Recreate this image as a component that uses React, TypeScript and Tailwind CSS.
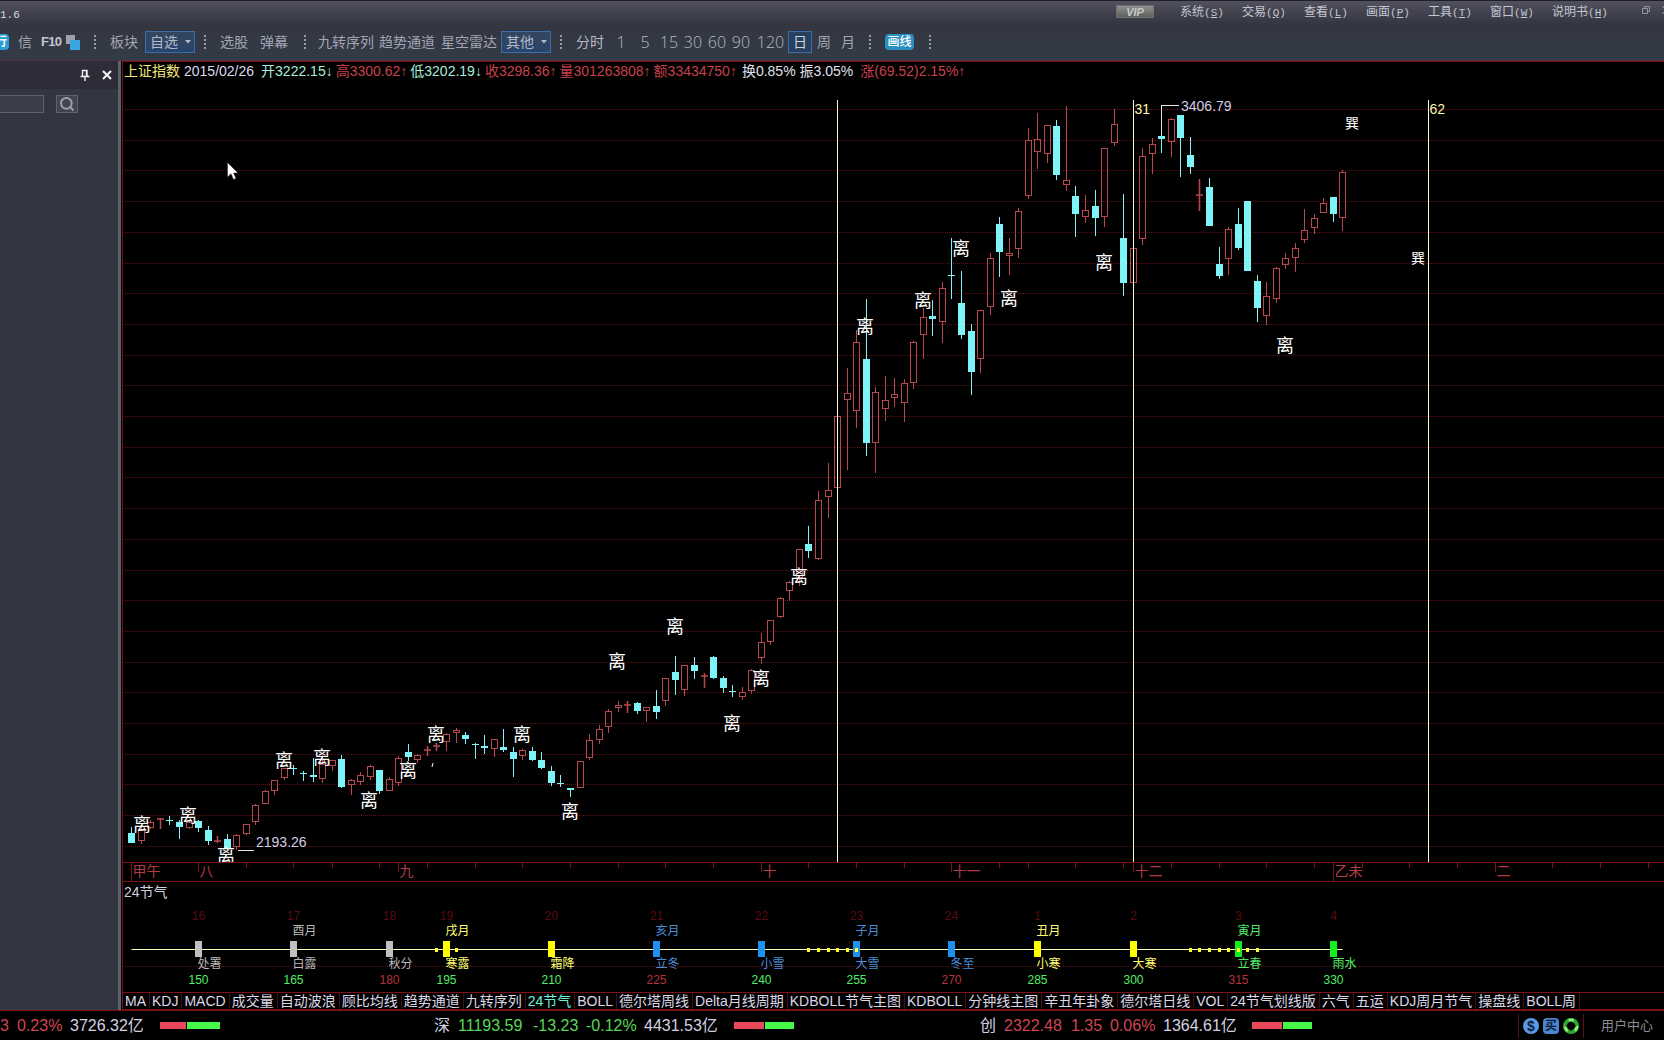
import { ReactNode } from 'react';
import { FiSearch } from 'react-icons/fi';

// u = close above open (hollow), d = close below open (filled)
type Candle = ['u' | 'd', number, number, number, number];

type Term = {
  bar: number;
  no: string;
  name: string;
  degree: string;
  month?: string;
  color: string;
  turn?: boolean;
};

const CHART_TOP = 84;
const FIRST_X = 8.3;
const STEP = 9.537;
const barX = (i: number) => Math.round(FIRST_X + i * STEP) + 0.5;

// side, high, body top, body bottom, low
const candles: Candle[] = [
  ['d', 827, 833, 843, 843], ['u', 826, 830, 841, 844], ['u', 820, 822, 828, 829], ['u', 818, 818, 820, 829],
  ['d', 816, 820, 821, 825], ['d', 820, 822, 827, 839], ['u', 820, 822, 828, 829], ['d', 820, 821, 828, 832],
  ['d', 826, 830, 841, 845], ['u', 836, 840, 842, 843], ['d', 834, 839, 848, 850], ['u', 834, 835, 847, 850],
  ['u', 824, 824, 834, 835], ['u', 804, 805, 822, 825], ['u', 790, 791, 804, 804], ['u', 780, 780, 791, 795],
  ['u', 768, 768, 778, 780], ['d', 765, 768, 769, 775], ['d', 771, 773, 774, 781], ['d', 758, 775, 777, 782],
  ['u', 755, 764, 779, 783], ['u', 760, 760, 766, 771], ['d', 755, 759, 787, 788], ['u', 779, 780, 785, 795],
  ['u', 772, 775, 782, 785], ['u', 765, 766, 777, 780], ['d', 770, 770, 791, 794], ['u', 777, 779, 791, 791],
  ['u', 756, 758, 783, 786], ['d', 744, 752, 757, 761], ['u', 754, 755, 760, 763], ['u', 746, 749, 751, 756],
  ['u', 743, 745, 747, 751], ['u', 733, 734, 742, 751], ['u', 728, 730, 733, 743], ['d', 732, 735, 739, 744],
  ['d', 743, 744, 745, 759], ['d', 735, 746, 748, 754], ['u', 739, 739, 749, 757], ['d', 729, 747, 750, 752],
  ['d', 747, 752, 759, 777], ['u', 749, 750, 756, 760], ['d', 747, 751, 760, 761], ['d', 752, 760, 768, 769],
  ['d', 766, 771, 783, 786], ['d', 775, 783, 784, 787], ['d', 788, 788, 790, 797], ['u', 761, 761, 788, 788],
  ['u', 734, 740, 758, 760], ['u', 725, 729, 740, 744], ['u', 709, 711, 727, 733], ['u', 701, 705, 708, 712],
  ['u', 701, 704, 706, 713], ['d', 702, 703, 711, 714], ['u', 707, 707, 711, 722], ['d', 690, 706, 712, 719],
  ['u', 678, 678, 701, 706], ['d', 656, 672, 680, 695], ['u', 665, 665, 690, 696], ['d', 657, 665, 671, 679],
  ['u', 673, 675, 677, 688], ['d', 656, 657, 678, 679], ['d', 676, 678, 688, 693], ['d', 685, 691, 692, 697],
  ['u', 687, 692, 697, 700], ['u', 669, 670, 691, 694], ['u', 633, 642, 658, 664], ['u', 620, 620, 642, 645],
  ['u', 597, 598, 617, 618], ['u', 581, 582, 591, 601], ['u', 549, 549, 578, 586], ['d', 526, 544, 551, 558],
  ['u', 491, 500, 559, 560], ['u', 463, 490, 497, 518], ['u', 416, 416, 488, 488], ['u', 368, 393, 400, 470],
  ['u', 330, 342, 411, 428], ['d', 299, 359, 443, 456], ['u', 387, 392, 443, 473], ['u', 376, 400, 409, 421],
  ['u', 378, 394, 398, 407], ['u', 379, 383, 403, 422], ['u', 341, 342, 383, 389], ['u', 308, 317, 335, 359],
  ['d', 300, 316, 319, 336], ['u', 282, 288, 322, 343], ['d', 238, 275, 276, 299], ['d', 271, 303, 335, 339],
  ['d', 324, 331, 372, 395], ['u', 310, 310, 359, 373], ['u', 253, 258, 307, 315], ['d', 217, 224, 252, 277],
  ['u', 238, 253, 256, 275], ['u', 208, 211, 249, 258], ['u', 128, 140, 196, 199], ['u', 113, 139, 152, 169],
  ['u', 125, 125, 154, 163], ['d', 120, 126, 175, 180], ['u', 106, 180, 185, 191], ['d', 186, 196, 214, 237],
  ['u', 195, 210, 217, 223], ['d', 190, 206, 218, 236], ['u', 148, 148, 217, 227], ['u', 109, 124, 143, 146],
  ['d', 194, 238, 283, 296], ['u', 248, 248, 283, 283], ['u', 148, 156, 239, 245], ['u', 138, 144, 154, 174],
  ['d', 105, 136, 139, 153], ['u', 118, 119, 142, 157], ['d', 115, 115, 138, 177], ['d', 137, 155, 167, 174],
  ['u', 179, 194, 196, 211], ['d', 178, 187, 226, 226], ['d', 247, 264, 276, 279], ['u', 227, 229, 259, 275],
  ['d', 208, 224, 248, 250], ['d', 201, 201, 271, 271], ['d', 275, 281, 308, 322], ['u', 282, 296, 316, 325],
  ['u', 267, 268, 299, 303], ['u', 253, 258, 265, 269], ['u', 243, 248, 258, 272], ['u', 209, 230, 240, 243],
  ['u', 214, 218, 228, 234], ['u', 198, 203, 213, 213], ['d', 197, 197, 214, 222], ['u', 170, 172, 218, 231],
];

const liMarks = [
  [19, 825], [65, 816], [103, 856], [161, 761], [199, 758], [246, 801], [285, 771], [313, 735], [399, 735],
  [447, 812], [494, 662], [552, 627], [609, 724], [638, 679], [676, 577], [742, 327], [800, 301], [838, 249],
  [886, 299], [981, 263], [1162, 346],
];
const xunMarks = [[1229, 123], [1295, 258]];

const cycleLines = [
  { bar: 74, label: '' },
  { bar: 105, label: '31' },
  { bar: 136, label: '62' },
];

const months = [
  [0, '甲午'], [7, '八'], [28, '九'], [66, '十'], [86, '十一'], [105, '十二'], [126, '乙未'], [143, '二'],
] as [number, string][];

const ticks = [
  12, 17, 21, 26, 31, 36, 41, 46, 51, 56, 61, 71, 76, 81, 91, 94, 99, 104, 109, 114, 119, 124, 129, 134, 139, 149,
  154, 159,
];

const terms: Term[] = [
  { bar: 7, no: '16', name: '处署', degree: '150', color: '#c0c0c0' },
  { bar: 17, no: '17', name: '白露', degree: '165', month: '酉月', color: '#c0c0c0' },
  { bar: 27, no: '18', name: '秋分', degree: '180', color: '#c0c0c0', turn: true },
  { bar: 33, no: '19', name: '寒露', degree: '195', month: '戌月', color: '#ffff00' },
  { bar: 44, no: '20', name: '霜降', degree: '210', color: '#ffff00' },
  { bar: 55, no: '21', name: '立冬', degree: '225', month: '亥月', color: '#1e90ee', turn: true },
  { bar: 66, no: '22', name: '小雪', degree: '240', color: '#1e90ee' },
  { bar: 76, no: '23', name: '大雪', degree: '255', month: '子月', color: '#1e90ee' },
  { bar: 86, no: '24', name: '冬至', degree: '270', color: '#1e90ee', turn: true },
  { bar: 95, no: '1', name: '小寒', degree: '285', month: '丑月', color: '#ffff00' },
  { bar: 105, no: '2', name: '大寒', degree: '300', color: '#ffff00' },
  { bar: 116, no: '3', name: '立春', degree: '315', month: '寅月', color: '#10f020', turn: true },
  { bar: 126, no: '4', name: '雨水', degree: '330', color: '#10f020' },
];

const labelColor: Record<string, string> = {
  '#c0c0c0': '#b8b8b8',
  '#ffff00': '#ffff70',
  '#1e90ee': '#4a8fd8',
  '#10f020': '#50ee68',
};

const eventDots = [32, 34, 71, 72, 73, 74, 75, 76, 111, 112, 113, 114, 115, 116, 117, 118];

const menus = [
  ['系统', 'S'], ['交易', 'Q'], ['查看', 'L'], ['画面', 'P'], ['工具', 'T'], ['窗口', 'W'], ['说明书', 'H'],
];

const quoteFields = [
  { text: '开3222.15↓', className: 'text-[#a8ecdc]' },
  { text: '高3300.62↑', className: 'text-[#c8414b]' },
  { text: '低3202.19↓', className: 'text-[#a8ecdc]' },
  { text: '收3298.36↑', className: 'text-[#c8414b]' },
  { text: '量301263808↑', className: 'text-[#c8414b]' },
  { text: '额33434750↑', className: 'text-[#c8414b]' },
  { text: '换0.85%', className: 'text-[#e0e0ee] ml-0.5' },
  { text: '振3.05%', className: 'text-[#e0e0ee] ml-px' },
  { text: '涨(69.52)2.15%↑', className: 'text-[#c8414b] ml-1' },
];

const tabs = [
  'MA', 'KDJ', 'MACD', '成交量', '自动波浪', '顾比均线', '趋势通道', '九转序列', '24节气', 'BOLL', '德尔塔周线',
  'Delta月线周期', 'KDBOLL节气主图', 'KDBOLL', '分钟线主图', '辛丑年卦象', '德尔塔日线', 'VOL', '24节气划线版', '六气',
  '五运', 'KDJ周月节气', '操盘线', 'BOLL周',
];

function Grip({ className }: { className: string }) {
  return (
    <svg width="2" height="14" className={`shrink-0 ${className}`}>
      <path d="M1 0V14" stroke="#9a9ca8" strokeWidth="2" strokeDasharray="2 2" />
    </svg>
  );
}

function ToolButton({ children, className = '' }: { children: ReactNode; className?: string }) {
  return (
    <button type="button" className={`h-6 shrink-0 whitespace-nowrap text-center ${className}`}>
      {children}
    </button>
  );
}

function ToolSelect({ label, option, className }: { label: string; option: string; className: string }) {
  return (
    <div className={`relative shrink-0 ${className}`}>
      <select
        aria-label={label}
        className="block h-[22px] w-[50px] appearance-none border border-[#3d6ea5] bg-linear-to-b from-[#34465f] to-[#27456d] pl-1 text-sm leading-5 text-[#b4b8c4] outline-none"
      >
        <option>{option}</option>
      </select>
      <svg width="6" height="4" className="pointer-events-none absolute top-[9px] right-1">
        <path d="M0 0H6L3 3.5Z" fill="#b4b8c4" />
      </svg>
    </div>
  );
}

function TitleBar() {
  return (
    <header className="flex h-6 items-start justify-between border-t border-[#1d1e2a] bg-linear-to-b from-[#51525e] via-[#42434f] via-50% to-[#343641]">
      <span className="mt-1.5 font-['Liberation_Mono'] text-[11px] leading-4 text-[#d8d8e0]">1.6</span>
      <div className="flex items-start">
        <span className="mt-1 mr-[26px] h-[13px] w-[38px] border border-[#6f716f] bg-linear-to-b from-[#8f918f] to-[#5d605e] text-center text-[11px] leading-3 font-bold text-[#c8cac8] italic">
          VIP
        </span>
        <nav className="flex text-xs leading-[22px] text-[#c4c6d0]">
          {menus.map(([name, key]) => (
            <button type="button" key={key} className="w-[62px] text-left whitespace-nowrap">
              {name}
              <span className="font-['Liberation_Mono'] text-[11px]">
                (<u>{key}</u>)
              </span>
            </button>
          ))}
        </nav>
        <button type="button" aria-label="还原" className="mt-[5px] ml-7 h-2 w-2">
          <svg width="8" height="8" fill="none" stroke="#9496a2">
            <path d="M2.5 2.5V0.5H7.5V5.5H5.5M0.5 2.5H5.5V7.5H0.5Z" />
          </svg>
        </button>
        <button type="button" aria-label="关闭" className="mt-[5px] ml-3 h-2 w-0.5 overflow-hidden">
          <svg width="8" height="8" stroke="#9496a2">
            <path d="M0 0L8 8M8 0L0 8" />
          </svg>
        </button>
      </div>
    </header>
  );
}

function Toolbar() {
  return (
    <div className="flex h-9 items-center bg-linear-to-b from-[#343641] to-[#323b47] text-sm text-[#a2a5b2]">
      <ToolButton className="flex w-[9px] items-center justify-end overflow-hidden">
        <span className="h-4 shrink-0 rounded-sm bg-[#2f9bd8] px-0.5 text-xs leading-4 font-bold text-white">行</span>
      </ToolButton>
      <ToolButton className="ml-[9px]">信</ToolButton>
      <ToolButton className="ml-[9px] w-4 text-[13px] font-bold tracking-tighter text-[#c4c6d0]">F10</ToolButton>
      <ToolButton className="ml-[9px]">
        <svg width="14" height="15">
          <rect width="9" height="9" fill="#9fa2ae" />
          <rect x="4" y="5" width="10" height="10" fill="#3aa5e0" />
        </svg>
      </ToolButton>
      <Grip className="ml-[14px]" />
      <ToolButton className="ml-[14px]">板块</ToolButton>
      <ToolSelect label="板块列表" option="自选" className="ml-[7px]" />
      <Grip className="ml-[9px]" />
      <ToolButton className="ml-[14px]">选股</ToolButton>
      <ToolButton className="ml-3">弹幕</ToolButton>
      <Grip className="ml-4" />
      <ToolButton className="ml-3">九转序列</ToolButton>
      <ToolButton className="ml-[5px]">趋势通道</ToolButton>
      <ToolButton className="ml-1.5">星空雷达</ToolButton>
      <ToolSelect label="其他指标" option="其他" className="ml-1" />
      <Grip className="ml-[9px]" />
      <ToolButton className="ml-[14px] text-[#b6b9c4]">分时</ToolButton>
      <div className="ml-[5px] flex items-center font-['Open_Sans','Noto_Sans_CJK_SC',sans-serif] text-base font-light text-[#b6b9c4]">
        {['1', '5', '15', '30', '60', '90'].map((period) => (
          <ToolButton key={period} className="w-6">{period}</ToolButton>
        ))}
        <ToolButton className="w-[35px]">120</ToolButton>
      </div>
      <button
        type="button"
        aria-pressed="true"
        className="h-[22px] w-6 border border-[#3d6ea5] bg-[#28405f] text-sm leading-5 text-[#d0d3dc]"
      >
        日
      </button>
      <ToolButton className="w-6">周</ToolButton>
      <ToolButton className="w-6">月</ToolButton>
      <Grip className="ml-[9px]" />
      <button
        type="button"
        className="ml-[14px] h-4 w-[29px] rounded-sm bg-[#2b8fc4] text-center text-xs leading-4 font-medium text-white"
      >
        画线
      </button>
      <Grip className="ml-[15px]" />
    </div>
  );
}

function SidePanel() {
  return (
    <aside className="w-[118px] shrink-0 bg-[#333540]">
      <div className="flex h-7 items-center justify-end gap-3 bg-[#2d2c38] pr-1.5">
        <button type="button" aria-label="固定">
          <svg width="10" height="12" fill="none" stroke="#f0f0f4">
            <path d="M2.5 7V1.5H7V7M6.5 1.5V7M0.5 7.5H9.5M5 8V12" strokeWidth="1.4" />
          </svg>
        </button>
        <button type="button" aria-label="关闭面板">
          <svg width="10" height="10" stroke="#f4f4f8" strokeWidth="2">
            <path d="M1 1L9 9M9 1L1 9" />
          </svg>
        </button>
      </div>
      <div className="mt-1.5 flex gap-3">
        <input
          type="text"
          aria-label="搜索股票"
          className="h-[18px] w-11 border border-l-0 border-[#5f6270] bg-[#3c3e4c] text-xs outline-none"
        />
        <button
          type="button"
          aria-label="搜索"
          className="flex h-[18px] w-[22px] items-center justify-center border border-[#5f6270] bg-[#42444f] text-[#9c9eaa]"
        >
          <FiSearch className="h-4 w-4" strokeWidth={3} />
        </button>
      </div>
    </aside>
  );
}

function CandleShape({ candle, x }: { candle: Candle; x: number }) {
  const [side, high, top, bottom, low] = candle;
  const thin = bottom - top <= 2;
  const height = bottom - top;
  if (side === 'd') {
    return (
      <g fill="#7ff4f8">
        <rect x={x - 0.5} y={high} width="1" height={low - high} />
        <rect x={x - 3.5} y={top} width="7" height={Math.max(height, 1)} />
      </g>
    );
  }
  return (
    <g fill="none" stroke="#b8484f">
      <path d={`M${x} ${high}V${top}M${x} ${bottom}V${low}`} />
      {thin ? (
        <path d={`M${x} ${high}V${low}M${x - 3.5} ${top + 1}h7`} strokeWidth="1.5" />
      ) : (
        <rect x={x - 3} y={top + 0.5} width="6" height={height - 1} />
      )}
    </g>
  );
}

// Daily candles with the trigram marks and the 31-bar cycle lines
function PriceChart() {
  return (
    <svg width="100%" height="778" className="block" role="img" aria-label="上证指数日线">
      <g transform={`translate(0 ${-CHART_TOP})`}>
        {Array.from({ length: 25 }, (_, i) => {
          const y = Math.round(109 + i * 30.7) + 0.5;
          return (
            <line key={i} x1="0" x2="100%" y1={y} y2={y} stroke="#5e1014" strokeDasharray="1 1" />
          );
        })}
        {candles.map((candle, i) => (
          <CandleShape key={i} candle={candle} x={barX(i)} />
        ))}
        {cycleLines.map(({ bar, label }) => (
          <g key={bar}>
            <line x1={barX(bar)} x2={barX(bar)} y1="100" y2="862" stroke="#fffcd0" />
            <text x={barX(bar) + 1} y="114" fontSize="14" fill="#fbf7a8">{label}</text>
          </g>
        ))}
        <g stroke="#e4e0f0" fill="none">
          <path d="M1038.5 136V105.5H1056" />
          <path d="M115 850.5H131" />
        </g>
        <g fontSize="14" fill="#d4cce4">
          <text x="1058" y="111">3406.79</text>
          <text x="133" y="847">2193.26</text>
        </g>
        <g fontSize="18" fill="#ffffff" textAnchor="middle">
          {liMarks.map(([x, y]) => (
            <text key={x} x={x} y={y + 6}>离</text>
          ))}
        </g>
        <g fontSize="14" fill="#ffffff" textAnchor="middle">
          {xunMarks.map(([x, y]) => (
            <text key={x} x={x} y={y + 5}>巽</text>
          ))}
        </g>
        <path d="M310 763L309 767" stroke="#ffffff" />
      </g>
    </svg>
  );
}

function MonthAxis() {
  return (
    <svg width="100%" height="20" className="block border-y border-[#7c1218]">
      <g stroke="#7c1218">
        {ticks.map((bar) => (
          <line key={bar} x1={barX(bar)} x2={barX(bar)} y1="0" y2="5" />
        ))}
        {months.map(([bar]) => (
          <line key={bar} x1={barX(bar)} x2={barX(bar)} y1="0" y2={bar % 126 === 0 ? 18 : 9} />
        ))}
      </g>
      <g fontSize="14" fill="#b03c44">
        {months.map(([bar, name]) => (
          <text key={bar} x={barX(bar) + 1} y="13">{name}</text>
        ))}
      </g>
    </svg>
  );
}

function SolarTerms() {
  return (
    <section>
      <h2 className="h-5 pl-px text-sm leading-5 text-[#d0d0dc]">24节气</h2>
      <svg width="100%" height="90" className="block text-xs">
        <line x1="0" x2="100%" y1="64.5" y2="64.5" stroke="#5e1014" strokeDasharray="1 1" />
        <line x1={barX(0)} x2={barX(127)} y1="47.5" y2="47.5" stroke="#ffffb4" />
        {terms.map((term) => {
          const x = barX(term.bar);
          return (
            <g key={term.bar}>
              <text x={x} y="18" textAnchor="middle" fill="#5a0a10">{term.no}</text>
              {term.month && <text x={x - 1} y="33" fill={labelColor[term.color]}>{term.month}</text>}
              <rect x={x - 3.5} y="39" width="7" height="16" fill={term.color} />
              <text x={x - 1} y="66" fill={labelColor[term.color]}>{term.name}</text>
              <text x={x} y="82" textAnchor="middle" fill={term.turn ? '#b43238' : '#50ee68'}>{term.degree}</text>
            </g>
          );
        })}
        {eventDots.map((bar) => (
          <rect key={bar} x={barX(bar) - 1.5} y="46" width="3" height="4" fill="#ffff30" />
        ))}
      </svg>
    </section>
  );
}

function ChartPanel() {
  return (
    <main className="ml-px min-w-0 flex-1 border-t border-l border-[#7c1218] bg-black">
      <div className="flex h-[22px] gap-[3px] pl-px text-sm leading-[18px] whitespace-nowrap">
        <span className="mr-px text-[#f0e878]">上证指数</span>
        <span className="mr-1 text-[#dcd8ec]">2015/02/26</span>
        {quoteFields.map((field) => (
          <span key={field.text} className={field.className}>{field.text}</span>
        ))}
      </div>
      <PriceChart />
      <MonthAxis />
      <SolarTerms />
      <div className="flex h-[18px] overflow-hidden border-y border-[#7c1218] text-sm leading-[17px] text-[#dcd8e8]">
        {tabs.map((tab) => (
          <button
            type="button"
            key={tab}
            className={`shrink-0 border-r border-[#4a0c10] pr-[3px] pl-0.5 whitespace-nowrap ${tab === '24节气' ? 'text-[#6cf0dc]' : ''}`}
          >
            {tab}
          </button>
        ))}
      </div>
    </main>
  );
}

function Breadth({ up, down }: { up: number; down: number }) {
  return (
    <div className="flex h-[7px] gap-px">
      <span className="bg-[#e84a5c]" style={{ width: up }} />
      <span className="bg-[#48f848]" style={{ width: down }} />
    </div>
  );
}

function StatusBar() {
  return (
    <footer className="flex h-[30px] items-center border-t border-[#7c1218] bg-black text-base whitespace-nowrap text-[#d4d0e0]">
      <div className="flex w-[434px] items-center">
        <span className="w-[17px] text-[#d04450]">3</span>
        <span className="w-[53px] text-[#d04450]">0.23%</span>
        <span className="w-[90px]">3726.32亿</span>
        <Breadth up={26} down={33} />
      </div>
      <div className="flex w-[546px] items-center">
        <span className="w-[24px]">深</span>
        <span className="w-[75px] text-[#58d858]">11193.59</span>
        <span className="w-[53px] text-[#58d858]">-13.23</span>
        <span className="w-[58px] text-[#58d858]">-0.12%</span>
        <span className="w-[90px]">4431.53亿</span>
        <Breadth up={30} down={29} />
      </div>
      <div className="flex flex-1 items-center">
        <span className="w-[24px]">创</span>
        <span className="w-[67px] text-[#d04450]">2322.48</span>
        <span className="w-[39px] text-[#d04450]">1.35</span>
        <span className="w-[53px] text-[#d04450]">0.06%</span>
        <span className="w-[89px]">1364.61亿</span>
        <Breadth up={30} down={29} />
      </div>
      <div className="flex h-6 items-center gap-1 border-x border-[#5a1014] px-1">
        <button type="button" aria-label="资金" className="h-4 w-4 rounded-full bg-[#5a9ae0] text-center text-sm leading-4 font-bold text-[#0c2040]">
          $
        </button>
        <button type="button" aria-label="买入" className="h-4 w-4 rounded-sm bg-[#4a86d0] text-center text-xs leading-4 font-bold text-[#0c1c38]">
          买
        </button>
        <button type="button" aria-label="刷新" className="h-4 w-4">
          <svg width="16" height="16" fill="none">
            <circle cx="8" cy="8" r="6" stroke="#2ea82e" strokeWidth="4" />
            <circle cx="8" cy="8" r="6" stroke="#8af07a" strokeWidth="3" strokeDasharray="5 7.56" />
            <path d="M8 3L13 8L8 13L3 8Z" fill="#000000" />
          </svg>
        </button>
      </div>
      <a href="#user" className="mr-[11px] ml-[17px] text-[13px] text-[#8c8c94]">用户中心</a>
    </footer>
  );
}

export default function App() {
  return (
    <div className="relative min-h-screen overflow-hidden bg-black font-['Liberation_Sans','Noto_Sans_CJK_SC',sans-serif]">
      <TitleBar />
      <Toolbar />
      <div className="flex border-t border-[#54303e]">
        <SidePanel />
        <div className="w-[3px] shrink-0 bg-[#5f626c]" />
        <ChartPanel />
      </div>
      <StatusBar />
      <svg width="12" height="19" className="pointer-events-none absolute top-[162px] left-[227px]">
        <path d="M0.5 0.5V15L4 11.8L6.5 17.5L9 16.4L6.6 11H11Z" fill="#ffffff" stroke="#202020" strokeWidth="0.5" />
      </svg>
    </div>
  );
}
